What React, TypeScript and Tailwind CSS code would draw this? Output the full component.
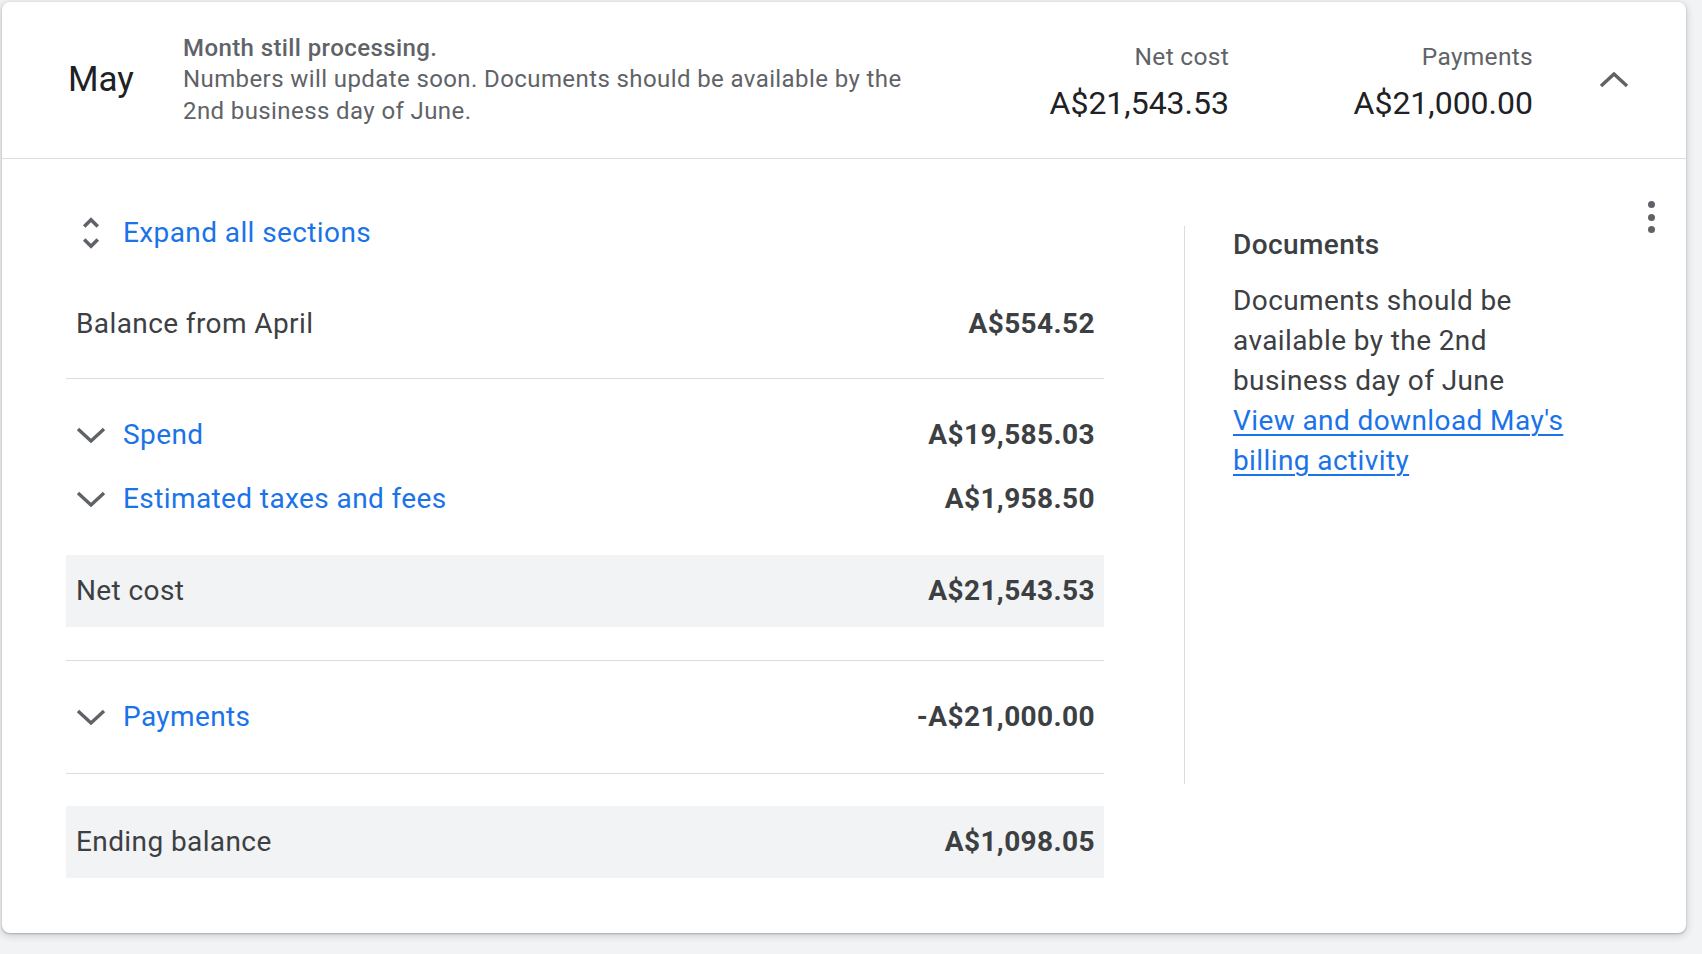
import React from "react";

const font = { fontFamily: "Roboto, 'Liberation Sans', sans-serif" };

function ChevronDown() {
  return (
    <svg width="30" height="16" viewBox="0 0 30 16" fill="none">
      <polyline points="2,2 15,14 28,2" stroke="#5f6368" strokeWidth="3.4" />
    </svg>
  );
}

function ChevronUp() {
  return (
    <svg width="30" height="16" viewBox="0 0 30 16" fill="none">
      <polyline points="2,14 15,2 28,14" stroke="#5f6368" strokeWidth="3.4" />
    </svg>
  );
}

function UnfoldMore() {
  return (
    <svg width="42" height="42" viewBox="0 0 24 24" fill="#5f6368">
      <path d="M12 5.83L15.17 9l1.41-1.41L12 3 7.41 7.59 8.83 9 12 5.83zm0 12.34L8.83 15l-1.41 1.41L12 21l4.59-4.59L15.17 15 12 18.17z" />
    </svg>
  );
}

function MoreVert() {
  return (
    <div className="w-[40px] h-[40px] flex flex-col items-center justify-center gap-[5.5px]">
      <span className="w-[7px] h-[7px] rounded-full bg-[#5f6368]" />
      <span className="w-[7px] h-[7px] rounded-full bg-[#5f6368]" />
      <span className="w-[7px] h-[7px] rounded-full bg-[#5f6368]" />
    </div>
  );
}

function Stat({ label, value, width }: { label: string; value: string; width?: string }) {
  return (
    <div className={`text-right mt-[4px] ${width ?? ""}`}>
      <div className="text-[24.5px] leading-[32px] text-[#5f6368] tracking-[0.3px]">{label}</div>
      <div className="text-[32px] leading-[40px] text-[#202124] mt-[10px]">{value}</div>
    </div>
  );
}

function ExpandRow({ label, amount }: { label: string; amount: string }) {
  return (
    <div className="flex items-center h-[40px] pr-[9px]">
      <div className="w-[49px] flex justify-center">
        <ChevronDown />
      </div>
      <span className="ml-[8px] text-[#1a73e8]">{label}</span>
      <span className="ml-auto font-bold text-[#3c4043]">{amount}</span>
    </div>
  );
}

function TotalRow({ label, amount }: { label: string; amount: string }) {
  return (
    <div className="flex items-center h-[72px] bg-[#f1f3f4] pl-[10px] pr-[9px]">
      <span className="text-[#3c4043]">{label}</span>
      <span className="ml-auto font-bold text-[#3c4043]">{amount}</span>
    </div>
  );
}

export default function App() {
  return (
    <div className="min-h-screen bg-[#f1f3f4] pt-[2px] pl-[2px]" style={font}>
      <div className="w-[1684px] bg-white rounded-lg shadow-[0_1px_2px_rgba(60,64,67,0.3),0_2px_6px_2px_rgba(60,64,67,0.15)]">
        {/* header */}
        <div className="h-[157px] flex items-center border-b border-[#dadce0] pl-[66px] pr-[57px]">
          <div className="w-[115px] text-[35px] leading-[40px] text-[#202124]">May</div>
          <div className="w-[750px] text-[24px] leading-[31.5px] text-[#5f6368] tracking-[0.4px]">
            <div className="font-medium">Month still processing.</div>
            <div>Numbers will update soon. Documents should be available by the 2nd business day of June.</div>
          </div>
          <div className="flex-1" />
          <Stat label="Net cost" value="A$21,543.53" />
          <Stat label="Payments" value="A$21,000.00" width="w-[304px]" />
          <div className="ml-[66px] w-[30px] flex">
            <ChevronUp />
          </div>
        </div>

        {/* body */}
        <div className="flex items-start pt-[38px] pb-[55px] text-[28px] leading-[40px] tracking-[0.4px]">
          <div className="w-[1038px] ml-[64px] mt-[16px]">
            <div className="flex items-center h-[40px]">
              <div className="w-[49px] flex justify-center">
                <UnfoldMore />
              </div>
              <span className="ml-[8px] text-[#1a73e8]">Expand all sections</span>
            </div>

            <div className="flex items-center pt-[51px] pb-[34px] pl-[10px] pr-[9px] border-b border-[#dadce0]">
              <span className="text-[#3c4043] h-[40px]">Balance from April</span>
              <span className="ml-auto font-bold text-[#3c4043]">A$554.52</span>
            </div>

            <div className="pt-[36px] flex flex-col gap-[24px]">
              <ExpandRow label="Spend" amount="A$19,585.03" />
              <ExpandRow label="Estimated taxes and fees" amount="A$1,958.50" />
            </div>

            <div className="mt-[36px]">
              <TotalRow label="Net cost" amount="A$21,543.53" />
            </div>

            <div className="mt-[33px] border-t border-[#dadce0] pt-[36px] pb-[36px] border-b">
              <ExpandRow label="Payments" amount="-A$21,000.00" />
            </div>

            <div className="mt-[32px]">
              <TotalRow label="Ending balance" amount="A$1,098.05" />
            </div>
          </div>

          <div className="ml-[80px] mt-[29px] w-[400px] h-[558px] border-l border-[#dadce0] pl-[48px] pt-[3px]">
            <div className="text-[28px] leading-[32px] font-medium text-[#3c4043]">Documents</div>
            <p className="mt-[20px] text-[#3c4043]">
              Documents should be available by the 2nd business day of June
              <a href="#" className="block text-[#1a73e8] underline underline-offset-[4px] decoration-[1.5px]">
                View and download May's billing activity
              </a>
            </p>
          </div>

          <div className="ml-[47px]">
            <MoreVert />
          </div>
        </div>
      </div>
    </div>
  );
}
